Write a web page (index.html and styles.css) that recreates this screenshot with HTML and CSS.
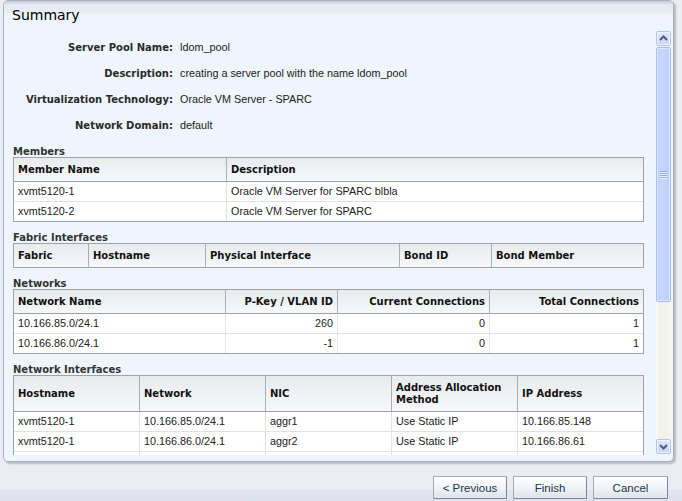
FILE: index.html
```html
<!DOCTYPE html>
<html lang="en">
<head>
<meta charset="utf-8">
<title>Summary</title>
<link rel="stylesheet" href="styles.css">
</head>
<body>
<div class="panel">
  <div class="panel-head"><h1 class="title">Summary</h1></div>
  <div class="panel-body">
    <div class="scroll">
      <dl class="form">
        <dt>Server Pool Name:</dt><dd>ldom_pool</dd>
        <dt>Description:</dt><dd>creating a server pool with the name ldom_pool</dd>
        <dt>Virtualization Technology:</dt><dd>Oracle VM Server - SPARC</dd>
        <dt>Network Domain:</dt><dd>default</dd>
      </dl>

      <section class="sec first">
        <h2 class="sec-title">Members</h2>
        <table class="grid">
          <thead><tr><th class="w213">Member Name</th><th class="last">Description</th></tr></thead>
          <tbody>
            <tr><td>xvmt5120-1</td><td class="last">Oracle VM Server for SPARC blbla</td></tr>
            <tr class="lastrow"><td>xvmt5120-2</td><td class="last">Oracle VM Server for SPARC</td></tr>
          </tbody>
        </table>
      </section>

      <section class="sec">
        <h2 class="sec-title">Fabric Interfaces</h2>
        <table class="grid">
          <thead><tr class="lastrow"><th class="w75">Fabric</th><th class="w117">Hostname</th><th class="w194">Physical Interface</th><th class="w92">Bond ID</th><th class="last">Bond Member</th></tr></thead>
        </table>
      </section>

      <section class="sec">
        <h2 class="sec-title">Networks</h2>
        <table class="grid">
          <thead><tr><th class="w212">Network Name</th><th class="w112 num">P-Key / VLAN ID</th><th class="w152 num">Current Connections</th><th class="last num">Total Connections</th></tr></thead>
          <tbody>
            <tr><td>10.166.85.0/24.1</td><td class="num">260</td><td class="num">0</td><td class="last num">1</td></tr>
            <tr class="lastrow"><td>10.166.86.0/24.1</td><td class="num">-1</td><td class="num">0</td><td class="last num">1</td></tr>
          </tbody>
        </table>
      </section>

      <section class="sec">
        <h2 class="sec-title">Network Interfaces</h2>
        <table class="grid tall">
          <thead><tr><th class="w126">Hostname</th><th class="w126">Network</th><th class="w126">NIC</th><th class="w126 wrap">Address Allocation Method</th><th class="last">IP Address</th></tr></thead>
          <tbody>
            <tr><td>xvmt5120-1</td><td>10.166.85.0/24.1</td><td>aggr1</td><td>Use Static IP</td><td class="last">10.166.85.148</td></tr>
            <tr><td>xvmt5120-1</td><td>10.166.86.0/24.1</td><td>aggr2</td><td>Use Static IP</td><td class="last">10.166.86.61</td></tr>
            <tr class="lastrow"><td>&nbsp;</td><td>&nbsp;</td><td>&nbsp;</td><td>&nbsp;</td><td class="last">&nbsp;</td></tr>
          </tbody>
        </table>
      </section>
    </div>
    <div class="scrollbar" aria-hidden="true">
      <div class="sb-btn">
        <svg width="13" height="13" viewBox="0 0 13 13"><polyline points="3,8 6.5,4.5 10,8" fill="none" stroke="#4a5c80" stroke-width="2"/></svg>
      </div>
      <div class="sb-track">
        <div class="sb-thumb"><span class="grip"></span></div>
      </div>
      <div class="sb-btn">
        <svg width="13" height="13" viewBox="0 0 13 13"><polyline points="3,5 6.5,8.5 10,5" fill="none" stroke="#4a5c80" stroke-width="2"/></svg>
      </div>
    </div>
  </div>
</div>
<div class="footer">
  <button class="btn prev" type="button">&lt; Previous</button>
  <button class="btn finish" type="button">Finish</button>
  <button class="btn cancel" type="button">Cancel</button>
</div>
</body>
</html>
```
FILE: styles.css
```css
html, body {
  margin: 0;
  padding: 0;
}
body {
  width: 682px;
  height: 501px;
  overflow: hidden;
  background: linear-gradient(to bottom, #ebedf4 0, #ebedf4 489px, #e2e5ee 490px, #dde1ea 501px);
  font-family: "Liberation Sans", Arial, sans-serif;
  font-size: 10.8px;
  color: #222;
}

.panel {
  margin-left: 3px;
  width: 671px;
  height: 462px;
  box-sizing: border-box;
  border: 1px solid #aab0ba;
  border-radius: 5px;
  background: #eef5fc;
  box-shadow: 2px 2px 2px rgba(120, 126, 140, 0.45);
  display: flex;
  flex-direction: column;
  overflow: hidden;
}

.panel-head {
  height: 29px;
  flex: none;
  background: linear-gradient(to bottom, #c5cbd6 0, #dbe0e9 3px, #e6ebf2 4px, #e8edf4 12px, #eef5fc 13px);
}
.title {
  margin: 0;
  padding-left: 8px;
  font-family: "DejaVu Sans", sans-serif;
  font-weight: normal;
  font-size: 14px;
  line-height: 29px;
  color: #000;
}

.panel-body {
  height: 425px;
  flex: none;
  display: flex;
}

.scroll {
  flex: 1;
  overflow: hidden;
  padding: 4px 12px 0 9px;
}

.form {
  margin: 0;
  display: grid;
  grid-template-columns: 160px 1fr;
  grid-auto-rows: 26px;
  column-gap: 7px;
  align-items: center;
}
.form dt {
  text-align: right;
  font-family: "DejaVu Sans", sans-serif;
  font-weight: bold;
  font-size: 10px;
  color: #2a2a2a;
  white-space: nowrap;
}
.form dd {
  margin: 0;
  color: #222;
  white-space: nowrap;
}

.sec {
  margin-top: 7px;
}
.sec.first {
  margin-top: 5px;
}
.sec-title {
  margin: 0;
  height: 14px;
  line-height: 17px;
  font-family: "DejaVu Sans", sans-serif;
  font-weight: bold;
  font-size: 10px;
  color: #333;
}

.grid {
  width: 631px;
  table-layout: fixed;
  border-collapse: separate;
  border-spacing: 0;
  border: 1px solid #9ea3aa;
  background: #fff;
}
.grid th {
  box-sizing: border-box;
  padding: 1px 4px 0;
  height: 24px;
  line-height: 22px;
  text-align: left;
  white-space: nowrap;
  font-family: "DejaVu Sans", sans-serif;
  font-weight: bold;
  font-size: 10px;
  color: #111;
  background: linear-gradient(to bottom, #e8eaee 0, #eff1f4 50%, #f7f8fa 100%);
  border-right: 1px solid #a9aeb5;
  border-bottom: 1px solid #9ea3aa;
}
.grid td {
  box-sizing: border-box;
  padding: 0 4px;
  height: 20px;
  line-height: 19px;
  white-space: nowrap;
  overflow: hidden;
  border-right: 1px solid #e2e2e2;
  border-bottom: 1px solid #e2e2e2;
  color: #222;
}
.grid .last {
  border-right: 0;
}
.grid .lastrow td,
.grid .lastrow th {
  border-bottom: 0;
}
.grid .lastrow th {
  height: 23px;
}
.grid tbody .lastrow td {
  height: 19px;
}
.grid .num {
  text-align: right;
}
.grid.tall th {
  height: 36px;
  line-height: 12px;
}
.grid.tall th.wrap {
  white-space: normal;
}

.w75 { width: 75px; }
.w92 { width: 92px; }
.w112 { width: 112px; }
.w117 { width: 117px; }
.w126 { width: 126px; }
.w152 { width: 152px; }
.w194 { width: 194px; }
.w212 { width: 212px; }
.w213 { width: 213px; }

.scrollbar {
  width: 15px;
  height: 423px;
  margin: 1px 2px 0 0;
  display: flex;
  flex-direction: column;
  background: #f4f3ea;
}
.sb-btn {
  width: 15px;
  height: 15px;
  box-sizing: border-box;
  border: 1px solid #b3c4ec;
  border-radius: 2px;
  box-shadow: inset 0 0 0 1px #eef3ff;
  background: linear-gradient(to bottom, #dbe5fd 0, #c6d5fa 100%);
  display: flex;
  align-items: center;
  justify-content: center;
  flex: none;
}
.sb-btn svg {
  display: block;
}
.sb-track {
  flex: 1;
  padding-top: 1px;
  background: linear-gradient(to right, #fdfdf8 0, #f3f2e8 3px, #f3f2e8 12px, #fbfbf6 15px);
}
.sb-thumb {
  height: 255px;
  box-sizing: border-box;
  border: 1px solid #a6bbee;
  border-radius: 2px;
  box-shadow: inset 0 0 0 1px #dfe8ff;
  background: linear-gradient(to right, #c0d1fb 0, #c6d6fc 50%, #bccdf8 100%);
  display: flex;
  align-items: center;
  justify-content: center;
}
.grip {
  display: block;
  width: 7px;
  height: 8px;
  background: repeating-linear-gradient(to bottom, #8ba7ec 0, #8ba7ec 1px, #eef3ff 1px, #eef3ff 2px);
}

.footer {
  display: flex;
  justify-content: flex-end;
  gap: 6px;
  padding: 14px 14px 0 0;
}
.btn {
  height: 23px;
  box-sizing: border-box;
  padding: 0;
  font-family: "Liberation Sans", Arial, sans-serif;
  font-size: 11.5px;
  color: #233548;
  background: linear-gradient(to bottom, #ffffff 0, #f3f5f9 45%, #dde3ec 100%);
  border: 1px solid #a3abb7;
  border-right-color: #7d8694;
  border-bottom-color: #7d8694;
  border-radius: 1px;
}
.prev { width: 74px; }
.finish { width: 74px; }
.cancel { width: 75px; }
```
